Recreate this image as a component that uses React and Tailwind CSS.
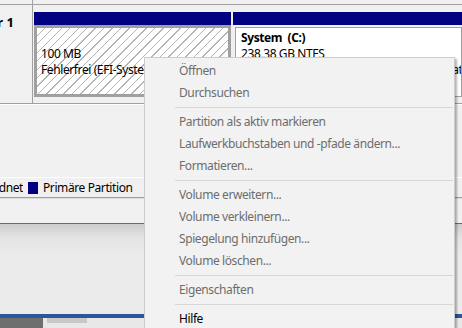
import React from 'react';

const menu = [
    { label: 'Öffnen' },
    { label: 'Durchsuchen' },
    { sep: true },
    { label: 'Partition als aktiv markieren' },
    { label: 'Laufwerkbuchstaben und -pfade ändern...' },
    { label: 'Formatieren...' },
    { sep: true },
    { label: 'Volume erweitern...' },
    { label: 'Volume verkleinern...' },
    { label: 'Spiegelung hinzufügen...' },
    { label: 'Volume löschen...' },
    { sep: true },
    { label: 'Eigenschaften' },
    { sep: true },
    { label: 'Hilfe', enabled: true },
];

const MenuItem = ({ label, enabled }) => (
    <div className={`h-[22px] flex items-center pl-[34px] whitespace-nowrap ${enabled ? 'text-black' : 'text-[#6d6d6d]'}`}>
        {label}
    </div>
);

const MenuSep = () => (
    <div className="pt-[3px] pb-[3px] pl-[30px] pr-[1px]">
        <div className="h-px bg-[#d7d7d7]"></div>
    </div>
);

const App = () => {
    return (
        <div className="relative w-[462px] h-[328px] overflow-hidden bg-[#f0f0f0] text-[12px] leading-[16px] tracking-[-0.4px] text-black font-['Noto_Sans',sans-serif]">
            {/* top strip */}
            <div className="h-[5px] flex border-b border-[#a0a0a0]">
                <div className="w-[33px] border-r border-[#a0a0a0]"></div>
            </div>

            {/* disk row */}
            <div className="h-[99px] flex border-b border-[#a0a0a0]">
                <div className="w-[33px] shrink-0 border-r border-[#a0a0a0] overflow-hidden flex justify-end pt-[9px] pr-[18px]">
                    <span className="font-bold whitespace-nowrap text-[13px] tracking-normal">Datenträger 1</span>
                </div>
                <div className="flex-1 flex pl-[1px] pt-[7px] min-w-0">
                    {/* EFI */}
                    <div className="w-[197px] shrink-0 flex flex-col">
                        <div className="h-[13px] bg-[#000080]"></div>
                        <div className="h-[72px] border-[3px] border-[#a0a0a0] bg-[repeating-linear-gradient(135deg,#ffffff_0px,#ffffff_5px,#b4b4b4_5px,#b4b4b4_6px)] pl-[4px] pt-[2px] overflow-hidden whitespace-nowrap">
                            <div className="h-[16px]"></div>
                            <div>100 MB</div>
                            <div>Fehlerfrei (EFI-Systempartition)</div>
                        </div>
                    </div>
                    {/* System */}
                    <div className="flex-1 ml-[2px] flex flex-col min-w-0">
                        <div className="h-[13px] bg-[#000080]"></div>
                        <div className="h-[72px] flex pt-[2px]">
                            <div className="flex-1 ml-[2px] border border-[#a0a0a0] bg-white pl-[5px] pt-[2px] overflow-hidden whitespace-nowrap">
                                <div className="font-bold whitespace-pre">System  (C:)</div>
                                <div>238,38 GB NTFS</div>
                                <div>Fehlerfrei (Startpartition, Auslagerungsdatei, Absturzabbild, Primäre Partition)</div>
                            </div>
                        </div>
                    </div>
                </div>
            </div>

            {/* empty area */}
            <div className="h-[73px] border-t border-white"></div>

            {/* legend */}
            <div className="h-[21px] flex items-center border-t border-white border-b border-b-[#a0a0a0]">
                <div className="w-[23px] overflow-hidden flex justify-end">
                    <span className="whitespace-nowrap">Nicht zugeordnet</span>
                </div>
                <div className="ml-[5px] w-[10px] h-[12px] bg-[#000080]"></div>
                <span className="ml-[5px] whitespace-nowrap">Primäre Partition</span>
            </div>

            <div className="h-[25px] border-t border-[#dcdcdc]"></div>

            {/* lower pane */}
            <div className="h-[91px] border-t border-[#6b6b6b] bg-[linear-gradient(to_bottom,#cdcdcd_0px,#e4e4e4_14px,#ebebeb_30px,#ebebeb_100%)]"></div>
            <div className="h-[4px] bg-[#2b579a]"></div>
            <div className="h-[10px] flex bg-[#e8e8e8]">
                <div className="w-[43px] bg-[#6e6e6e]"></div>
                <div className="ml-[4px] w-[40px] h-[5px] bg-[#c8c8c8]"></div>
            </div>

            {/* context menu */}
            <div className="absolute left-[144px] top-[57px] w-[311px] h-[290px] bg-[#f2f2f2] border border-[#cccccc] pt-[2px] shadow-[2px_2px_2px_rgba(0,0,0,0.3)]">
                {menu.map((m, i) => (m.sep ? <MenuSep key={i} /> : <MenuItem key={i} label={m.label} enabled={m.enabled} />))}
            </div>
        </div>
    );
};

export default App;
